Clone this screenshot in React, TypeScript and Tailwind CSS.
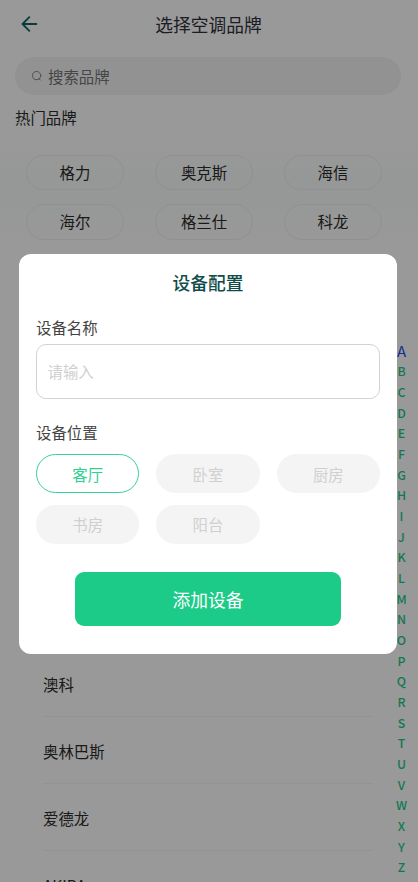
import clsx from "clsx";

const hotBrands = ["格力", "奥克斯", "海信", "海尔", "格兰仕", "科龙"];
const brands = ["澳科", "奥林巴斯", "爱德龙", "AKIRA"];
const rooms = ["客厅", "卧室", "厨房", "书房", "阳台"];
const letters = "ABCDEFGHIJKLMNOPQRSTUVWXYZ".split("");

function Header() {
  return (
    <header className="grid h-[48px] grid-cols-[1fr_auto_1fr] items-center pl-[21px] pr-[22px]">
      <svg width="17" height="16" viewBox="0 0 17 16" fill="none" stroke="#0f6460" strokeWidth="1.8" strokeLinecap="round" strokeLinejoin="round" className="mb-px">
        <path d="M8.3 1.2 1.5 8l6.8 6.8M1.8 8h13.6" />
      </svg>
      <h1 className="text-[17.75px] leading-6 text-[#30303c]">选择空调品牌</h1>
      <span />
    </header>
  );
}

function SearchBar() {
  return (
    <div className="ml-[15px] mr-[17px] mt-[9px] flex h-[38px] items-center rounded-full bg-[#f4f4f4] pl-[17px]">
      <svg width="11" height="12" viewBox="0 0 11 12" fill="none" stroke="#858585" strokeWidth="1" strokeLinecap="round">
        <circle cx="4.7" cy="5.6" r="4.1" />
        <path d="M6.9 8.4l1.3 1.6" />
      </svg>
      <span className="ml-[5px] text-[15.4px] leading-6 text-[#757575]">搜索品牌</span>
    </div>
  );
}

function BrandList() {
  return (
    <ul className="mt-[400px] pl-[43px] pr-[45px]">
      {brands.map((brand) => (
        <li key={brand} className="flex h-[67px] items-center border-b border-[#f5f5f5] pt-[2px] text-[15.4px] leading-6 text-[#2c2c2c]">
          {brand}
        </li>
      ))}
    </ul>
  );
}

function LetterIndex() {
  return (
    <nav className="absolute right-[6.5px] top-[340.5px] flex w-5 flex-col text-center font-medium text-[#1cca87]">
      {letters.map((letter) => (
        <span
          key={letter}
          className={clsx("h-[20.68px] leading-[20px]", letter === "A" ? "text-[15px] font-normal text-[#2f4deb]" : "text-[12.3px]")}
        >
          {letter}
        </span>
      ))}
    </nav>
  );
}

function DeviceDialog() {
  return (
    <div role="dialog" className="ml-[19px] mt-[254px] h-[400px] w-[378px] rounded-xl bg-white px-[17px] pt-4">
      <h2 className="text-center text-[17.75px] font-medium leading-6 text-[#0f4c4a]">设备配置</h2>

      <div className="mt-[21px] text-[15.4px] leading-6 text-[#444]">设备名称</div>
      <div className="mt-[5px] flex h-[55px] items-center rounded-[10px] border border-[#d2d2d2] pl-[10.5px] text-[15.4px] text-[#cfcfcf]">
        请输入
      </div>

      <div className="mt-[21px] text-[15.4px] leading-6 text-[#444]">设备位置</div>
      <div className="mt-[10px] grid grid-cols-3 gap-x-[17px] gap-y-[11.5px]">
        {rooms.map((room, i) => (
          <button
            key={room}
            className={clsx(
              "h-[39px] rounded-full text-[15.4px] leading-6",
              i === 0 ? "border-[1.5px] border-[#35d394] bg-white text-[#2fd090]" : "bg-[#f4f4f4] text-[#d0d0d0]"
            )}
          >
            {room}
          </button>
        ))}
      </div>

      <button className="mx-auto mt-7 block h-[54px] w-[266px] rounded-[9px] bg-[#1dcb88] pt-px text-[17.75px] leading-6 text-white">
        添加设备
      </button>
    </div>
  );
}

export default function App() {
  return (
    <div className="relative h-[882px] w-[418px] overflow-hidden bg-white font-['Noto_Sans_CJK_SC',sans-serif]" lang="zh-CN">
      <Header />
      <SearchBar />
      <div className="mt-[10px] pl-[15px] text-[15.4px] leading-6 text-[#2c2c2c]">热门品牌</div>
      <div className="bg-linear-to-b from-white via-[#fafdfc] to-white pb-[10px] pl-[26px] pr-9 pt-[25.5px]">
        <div className="grid grid-cols-[98px_98px_98px] justify-between gap-y-[14px]">
          {hotBrands.map((brand) => (
            <div
              key={brand}
              className="flex h-[35.5px] items-center justify-center rounded-full border border-[#f0f0f0] text-[15.4px] text-[#2c2c2c]"
            >
              {brand}
            </div>
          ))}
        </div>
      </div>
      <BrandList />
      <LetterIndex />

      <div className="absolute inset-0 bg-black/40">
        <DeviceDialog />
      </div>
    </div>
  );
}
